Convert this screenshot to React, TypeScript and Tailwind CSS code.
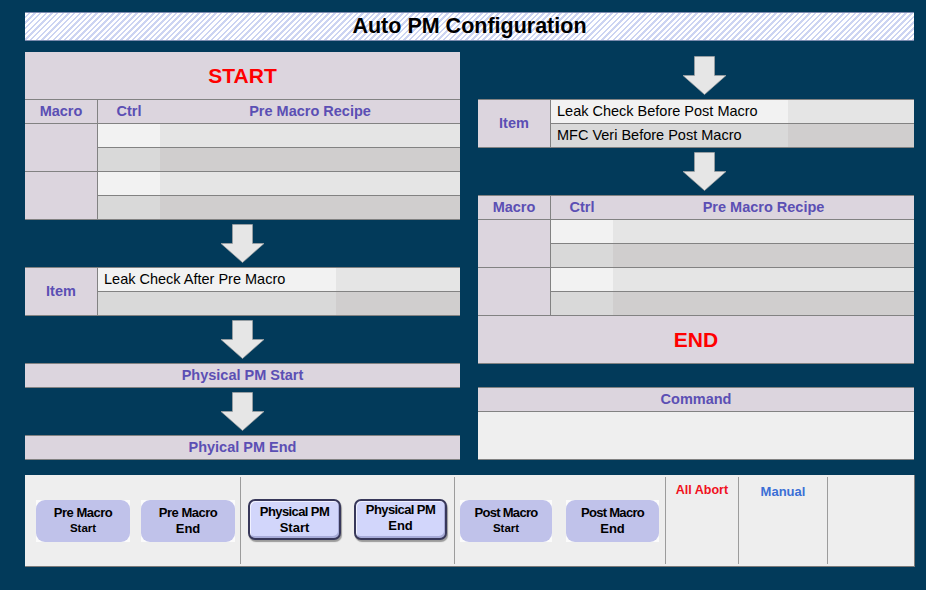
import React from 'react';

const Arrow = () => (
  <svg width="45" height="40" viewBox="0 0 45 40">
    <polygon
      points="12.5,0.5 32.5,0.5 32.5,19.5 44,19.5 22.5,38.5 1,19.5 12.5,19.5"
      fill="#e6e6e6"
      stroke="#a4a4a4"
      strokeWidth="0.7"
    />
  </svg>
);

const HEAD = 'text-[#5b4fb4] font-bold text-[14.5px] leading-none';

function HeaderRow() {
  return (
    <div className="flex h-[24px] border-t border-[#828282] bg-[#dcd5de]">
      <div className={`w-[73px] shrink-0 border-r border-[#828282] flex items-center justify-center ${HEAD}`}>Macro</div>
      <div className={`w-[62px] shrink-0 flex items-center justify-center ${HEAD}`}>Ctrl</div>
      <div className={`flex-1 flex items-center justify-center ${HEAD}`}>Pre Macro Recipe</div>
    </div>
  );
}

function MacroGroup() {
  return (
    <div className="flex h-[48px]">
      <div className="w-[73px] shrink-0 border-t border-r border-[#828282] bg-[#dcd5de]" />
      <div className="flex-1 flex flex-col">
        <div className="h-[24px] flex border-t border-[#828282]">
          <div className="w-[62px] shrink-0 bg-[#f2f2f2]" />
          <div className="flex-1 bg-[#e5e5e5]" />
        </div>
        <div className="h-[24px] flex border-t border-[#828282]">
          <div className="w-[62px] shrink-0 bg-[#d9d9d9]" />
          <div className="flex-1 bg-[#d0cece]" />
        </div>
      </div>
    </div>
  );
}

function ItemBlock({ top, bottom, cellW }: { top: string; bottom: string; cellW: string }) {
  return (
    <div className="flex h-[49px] border-b border-[#828282]">
      <div className={`w-[73px] shrink-0 border-t border-r border-[#828282] bg-[#dcd5de] flex items-center justify-center ${HEAD}`}>
        Item
      </div>
      <div className="flex-1 flex flex-col">
        <div className="h-[24px] flex border-t border-[#828282]">
          <div className={`${cellW} shrink-0 bg-[#f2f2f2] flex items-center pl-[6px] text-[14.5px] text-black leading-none`}>{top}</div>
          <div className="flex-1 bg-[#e5e5e5]" />
        </div>
        <div className="h-[24px] flex border-t border-[#828282]">
          <div className={`${cellW} shrink-0 bg-[#d9d9d9] flex items-center pl-[6px] text-[14.5px] text-black leading-none`}>{bottom}</div>
          <div className="flex-1 bg-[#d0cece]" />
        </div>
      </div>
    </div>
  );
}

function Bar({ label }: { label: string }) {
  return (
    <div className={`h-[25px] border-t border-b border-[#828282] bg-[#dcd5de] flex items-center justify-center ${HEAD}`}>
      {label}
    </div>
  );
}

function FlatBtn({ l1, l2, small }: { l1: string; l2: string; small?: boolean }) {
  return (
    <div className="w-[94px] h-[42px] shrink-0 bg-[#fbfbfb]">
      <div className="w-full h-full rounded-[9px] bg-[#c0c2ea] flex flex-col items-center justify-center font-bold text-black leading-none">
        <span className="text-[13px] tracking-[-0.5px]">{l1}</span>
        <span className={small ? 'text-[11.5px] mt-[4px]' : 'text-[13px] mt-[3px]'}>{l2}</span>
      </div>
    </div>
  );
}

function BevelBtn({ l1, l2, up }: { l1: string; l2: string; up?: boolean }) {
  return (
    <div
      className={`w-[93px] h-[41px] shrink-0 rounded-[7px] border-2 border-[#38385a] bg-[#d2d6fb] shadow-[inset_1px_1px_0_#f0f1ff,inset_-1px_-2px_0_#a7abd8,1px_2px_1px_rgba(0,0,0,0.35)] flex flex-col items-center justify-center font-bold text-black leading-none ${up ? 'pb-[4px]' : ''}`}
    >
      <span className="text-[13px] tracking-[-0.6px]">{l1}</span>
      <span className="text-[13px] mt-[3px]">{l2}</span>
    </div>
  );
}

const Divider = () => <div className="w-px shrink-0 self-stretch my-[2px] bg-[#9c9c9c]" />;

export default function App() {
  return (
    <div className="w-[926px] h-[590px] bg-[#023a5a] pt-[12px] pl-[25px] font-['Liberation_Sans',Arial,sans-serif] overflow-hidden">
      {/* Title */}
      <div className="w-[889px] h-[29px] border-y border-[#7c8bae] bg-[repeating-linear-gradient(135deg,#ffffff_0px,#ffffff_2.2px,#ccd4f2_2.2px,#ccd4f2_4px)] flex items-center justify-center">
        <span className="text-[21.5px] font-bold text-black leading-none">Auto PM Configuration</span>
      </div>

      <div className="flex gap-[18px] mt-[11px]">
        {/* Left column */}
        <div className="w-[435px] flex flex-col">
          <div className="border-b border-[#828282]">
            <div className="h-[47px] bg-[#dcd5de] flex items-center justify-center">
              <span className="text-[21px] font-bold text-[#ff0000] leading-none">START</span>
            </div>
            <HeaderRow />
            <MacroGroup />
            <MacroGroup />
          </div>
          <div className="h-[47px] flex justify-center pt-[4px]">
            <Arrow />
          </div>
          <ItemBlock top="Leak Check After Pre Macro" bottom="" cellW="w-[238px]" />
          <div className="h-[47px] flex justify-center pt-[4px]">
            <Arrow />
          </div>
          <Bar label="Physical PM Start" />
          <div className="h-[47px] flex justify-center pt-[4px]">
            <Arrow />
          </div>
          <Bar label="Phyical PM End" />
        </div>

        {/* Right column */}
        <div className="w-[436px] flex flex-col">
          <div className="h-[47px] flex justify-center pt-[4px] pl-[16px]">
            <Arrow />
          </div>
          <ItemBlock top="Leak Check Before Post Macro" bottom="MFC Veri Before Post Macro" cellW="w-[237px]" />
          <div className="h-[47px] flex justify-center pt-[4px] pl-[16px]">
            <Arrow />
          </div>
          <div>
            <HeaderRow />
            <MacroGroup />
            <MacroGroup />
            <div className="h-[49px] border-t border-b border-[#828282] bg-[#dcd5de] flex items-center justify-center">
              <span className="text-[21px] font-bold text-[#ff0000] leading-none">END</span>
            </div>
          </div>
          <div className="h-[23px]" />
          <div className="border-b border-[#828282]">
            <div className={`h-[24px] border-t border-[#828282] bg-[#dcd5de] flex items-center justify-center ${HEAD}`}>
              Command
            </div>
            <div className="h-[48px] border-t border-[#828282] bg-[#efefef]" />
          </div>
        </div>
      </div>

      {/* Toolbar */}
      <div className="w-[890px] h-[92px] mt-[15px] bg-[#eeeeee] border-r border-b border-[#7a7a7a] flex">
        <div className="w-[215px] shrink-0 flex items-center pl-[11px] gap-[11px]">
          <FlatBtn l1="Pre Macro" l2="Start" small />
          <FlatBtn l1="Pre Macro" l2="End" />
        </div>
        <Divider />
        <div className="w-[213px] shrink-0 flex items-center pl-[7px] gap-[13px] pb-[2px]">
          <BevelBtn l1="Physical PM" l2="Start" />
          <BevelBtn l1="Physical PM" l2="End" up />
        </div>
        <Divider />
        <div className="w-[210px] shrink-0 flex items-center pl-[5px] gap-[14px]">
          <div className="w-[92px] h-[42px] shrink-0 bg-[#fbfbfb]">
            <div className="w-full h-full rounded-[9px] bg-[#c0c2ea] flex flex-col items-center justify-center font-bold text-black leading-none">
              <span className="text-[13px] tracking-[-0.7px]">Post Macro</span>
              <span className="text-[11.5px] mt-[4px]">Start</span>
            </div>
          </div>
          <div className="w-[93px] h-[42px] shrink-0 bg-[#fbfbfb]">
            <div className="w-full h-full rounded-[9px] bg-[#c0c2ea] flex flex-col items-center justify-center font-bold text-black leading-none">
              <span className="text-[13px] tracking-[-0.7px]">Post Macro</span>
              <span className="text-[13px] mt-[3px]">End</span>
            </div>
          </div>
        </div>
        <Divider />
        <div className="w-[72px] shrink-0 flex justify-center pt-[9px]">
          <span className="text-[12.5px] font-bold text-[#f01020] leading-none">All Abort</span>
        </div>
        <Divider />
        <div className="w-[88px] shrink-0 flex justify-center pt-[10px]">
          <span className="text-[13px] font-bold text-[#3b6fd6] leading-none">Manual</span>
        </div>
        <Divider />
        <div className="flex-1" />
      </div>
    </div>
  );
}
